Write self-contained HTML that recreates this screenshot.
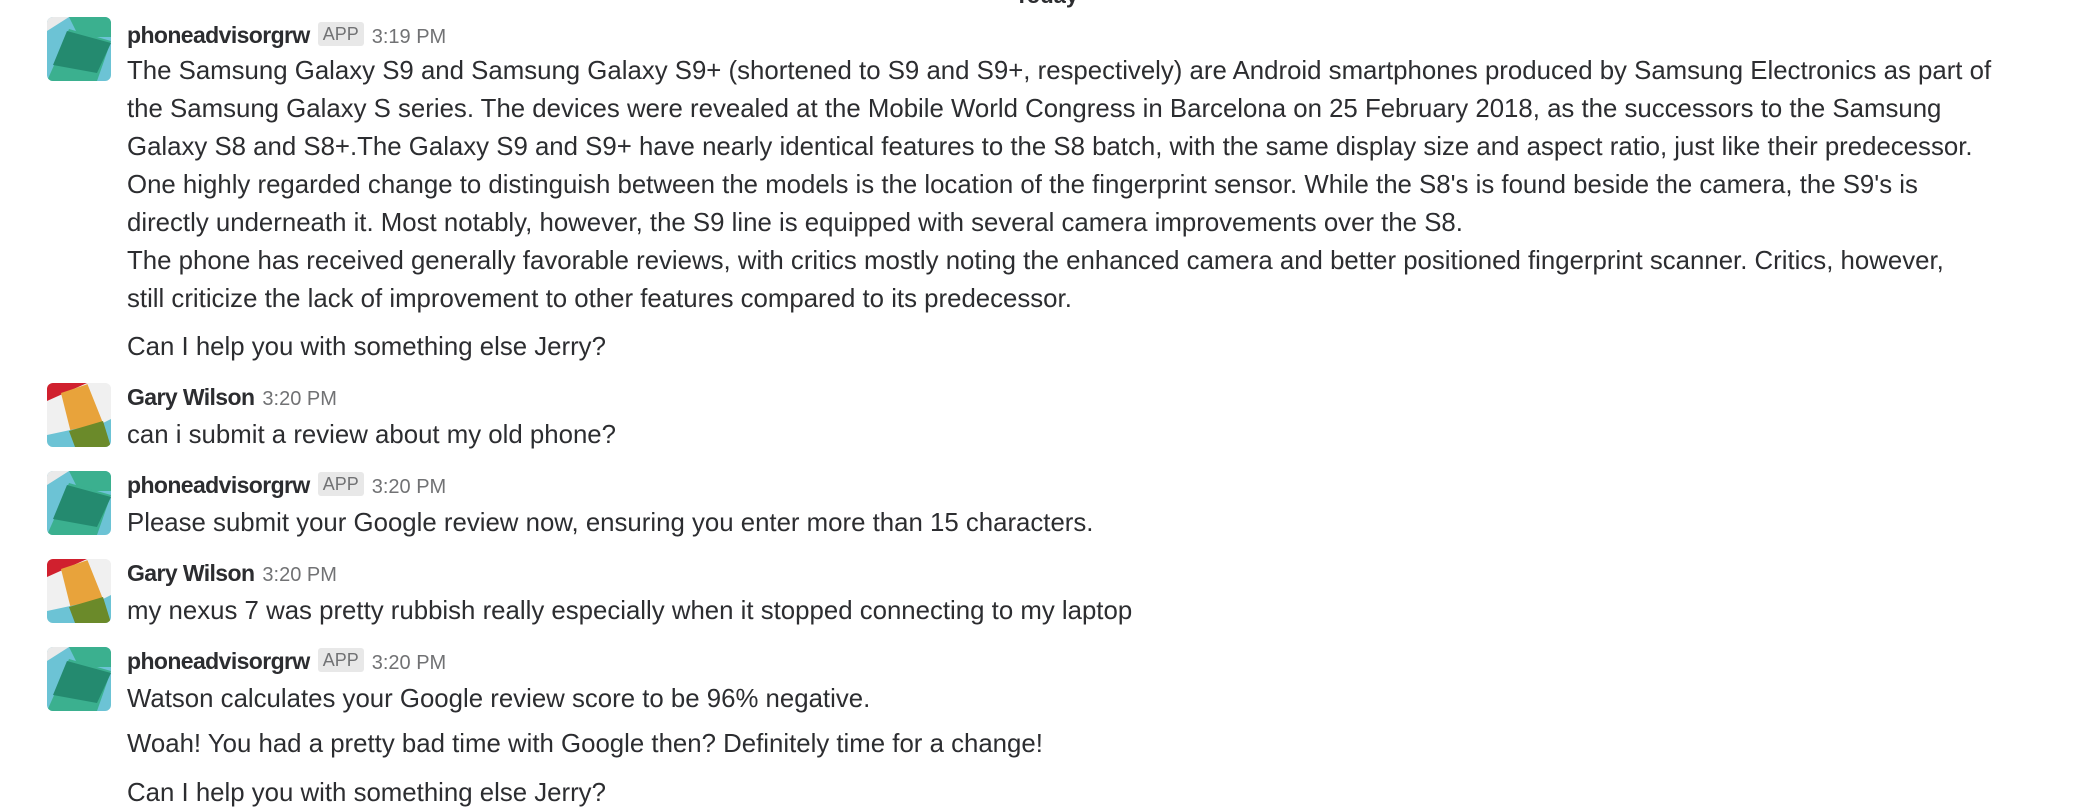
<!DOCTYPE html>
<html><head><meta charset="utf-8"><style>
body{margin:0;width:2080px;height:806px;background:#fff;overflow:hidden;position:relative;font-family:"Liberation Sans",sans-serif;color:#2c2d30}
.l{position:absolute;left:127px;font-size:25.8px;line-height:38px;white-space:nowrap}
.n{position:absolute;left:127px;font-size:23px;line-height:38px;font-weight:bold;white-space:nowrap;letter-spacing:-0.6px}
.t{font-weight:normal;color:#717274;font-size:20px;margin-left:8px;letter-spacing:0}
.app{display:inline-block;font-weight:normal;background:#e8e8e8;color:#717274;font-size:18px;line-height:24px;padding:0 5px;border-radius:3px;margin-left:8px;vertical-align:3px;letter-spacing:0}
svg{position:absolute;left:47px}
.today{position:absolute;left:1015px;top:-16px;font-weight:bold;font-size:22px;line-height:24px}
</style></head><body>
<div class="today">Today</div>
<svg style="top:17px" width="64" height="64" viewBox="0 0 64 64"><defs><clipPath id="c1"><rect width="64" height="64" rx="6"/></clipPath></defs><g clip-path="url(#c1)"><rect width="64" height="64" fill="#6cc3d5"/><polygon points="0,0 22,0 0,14" fill="#eaeaea"/><polygon points="22,0 64,0 64,20 32,20" fill="#3bb08f"/><polygon points="22,12 64,24 50,64 0,64 8,46" fill="#3bb08f"/><polygon points="20,14 64,26 50,56 6,48" fill="#248a6f"/></g></svg>
<div class="n" style="top:16px">phoneadvisorgrw<span class="app">APP</span><span class="t">3:19 PM</span></div>
<div class="l" style="top:52px">The Samsung Galaxy S9 and Samsung Galaxy S9+ (shortened to S9 and S9+, respectively) are Android smartphones produced by Samsung Electronics as part of</div>
<div class="l" style="top:90px">the Samsung Galaxy S series. The devices were revealed at the Mobile World Congress in Barcelona on 25 February 2018, as the successors to the Samsung</div>
<div class="l" style="top:128px">Galaxy S8 and S8+.The Galaxy S9 and S9+ have nearly identical features to the S8 batch, with the same display size and aspect ratio, just like their predecessor.</div>
<div class="l" style="top:166px">One highly regarded change to distinguish between the models is the location of the fingerprint sensor. While the S8's is found beside the camera, the S9's is</div>
<div class="l" style="top:204px">directly underneath it. Most notably, however, the S9 line is equipped with several camera improvements over the S8.</div>
<div class="l" style="top:242px">The phone has received generally favorable reviews, with critics mostly noting the enhanced camera and better positioned fingerprint scanner. Critics, however,</div>
<div class="l" style="top:280px">still criticize the lack of improvement to other features compared to its predecessor.</div>
<div class="l" style="top:328px">Can I help you with something else Jerry?</div>

<svg style="top:383px" width="64" height="64" viewBox="0 0 64 64"><defs><clipPath id="c2"><rect width="64" height="64" rx="6"/></clipPath></defs><g clip-path="url(#c2)"><rect width="64" height="64" fill="#f0f0f0"/><polygon points="0,0 40,0 0,18" fill="#d0202e"/><polygon points="14,10 44,0 56,40 24,50" fill="#e8a33b"/><polygon points="40,0 56,40 64,40 64,0" fill="#f0f0f0"/><polygon points="0,52 56,40 64,36 64,64 0,64" fill="#6cc3d5"/><polygon points="22,48 56,38 64,64 28,64" fill="#6b8a2a"/></g></svg>
<div class="n" style="top:378px">Gary Wilson<span class="t">3:20 PM</span></div>
<div class="l" style="top:416px">can i submit a review about my old phone?</div>

<svg style="top:471px" width="64" height="64" viewBox="0 0 64 64"><defs><clipPath id="c3"><rect width="64" height="64" rx="6"/></clipPath></defs><g clip-path="url(#c3)"><rect width="64" height="64" fill="#6cc3d5"/><polygon points="0,0 22,0 0,14" fill="#eaeaea"/><polygon points="22,0 64,0 64,20 32,20" fill="#3bb08f"/><polygon points="22,12 64,24 50,64 0,64 8,46" fill="#3bb08f"/><polygon points="20,14 64,26 50,56 6,48" fill="#248a6f"/></g></svg>
<div class="n" style="top:466px">phoneadvisorgrw<span class="app">APP</span><span class="t">3:20 PM</span></div>
<div class="l" style="top:504px">Please submit your Google review now, ensuring you enter more than 15 characters.</div>

<svg style="top:559px" width="64" height="64" viewBox="0 0 64 64"><defs><clipPath id="c4"><rect width="64" height="64" rx="6"/></clipPath></defs><g clip-path="url(#c4)"><rect width="64" height="64" fill="#f0f0f0"/><polygon points="0,0 40,0 0,18" fill="#d0202e"/><polygon points="14,10 44,0 56,40 24,50" fill="#e8a33b"/><polygon points="40,0 56,40 64,40 64,0" fill="#f0f0f0"/><polygon points="0,52 56,40 64,36 64,64 0,64" fill="#6cc3d5"/><polygon points="22,48 56,38 64,64 28,64" fill="#6b8a2a"/></g></svg>
<div class="n" style="top:554px">Gary Wilson<span class="t">3:20 PM</span></div>
<div class="l" style="top:592px">my nexus 7 was pretty rubbish really especially when it stopped connecting to my laptop</div>

<svg style="top:647px" width="64" height="64" viewBox="0 0 64 64"><defs><clipPath id="c5"><rect width="64" height="64" rx="6"/></clipPath></defs><g clip-path="url(#c5)"><rect width="64" height="64" fill="#6cc3d5"/><polygon points="0,0 22,0 0,14" fill="#eaeaea"/><polygon points="22,0 64,0 64,20 32,20" fill="#3bb08f"/><polygon points="22,12 64,24 50,64 0,64 8,46" fill="#3bb08f"/><polygon points="20,14 64,26 50,56 6,48" fill="#248a6f"/></g></svg>
<div class="n" style="top:642px">phoneadvisorgrw<span class="app">APP</span><span class="t">3:20 PM</span></div>
<div class="l" style="top:680px">Watson calculates your Google review score to be 96% negative.</div>
<div class="l" style="top:725px">Woah! You had a pretty bad time with Google then? Definitely time for a change!</div>
<div class="l" style="top:774px">Can I help you with something else Jerry?</div>
</body></html>
